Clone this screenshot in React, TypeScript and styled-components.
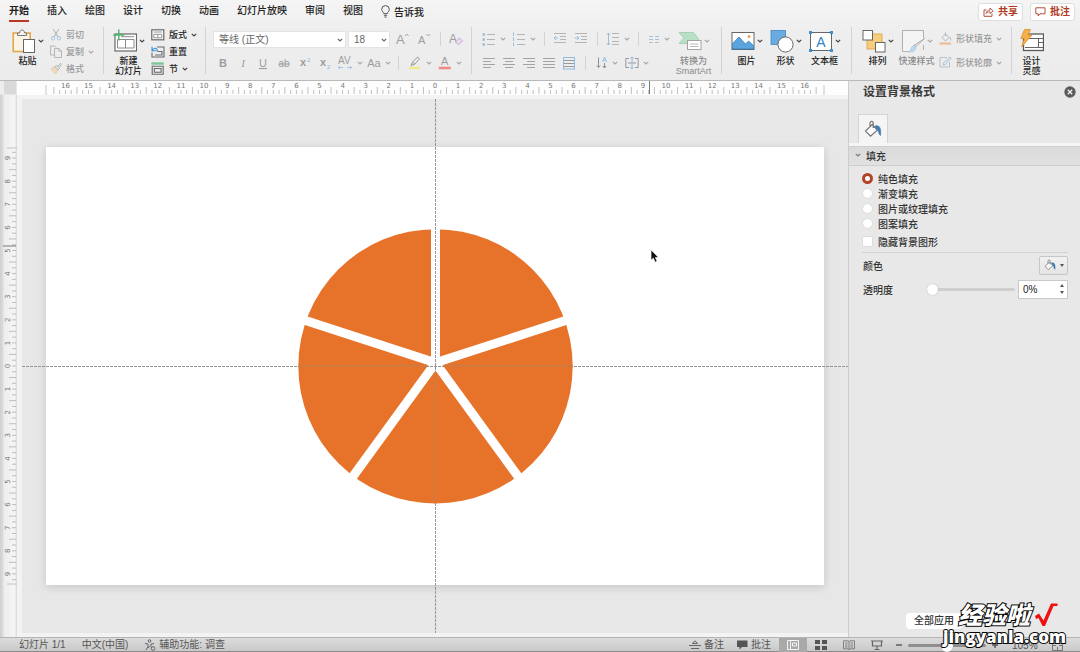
import React from "react";
import styled, { createGlobalStyle } from "styled-components";

const GlobalStyle = createGlobalStyle`
  *, *::before, *::after { box-sizing: border-box; }
  body { margin: 0; background: #e7e7e7; }
  body, button, input, select {
    font-family: "Liberation Sans", "Noto Sans CJK SC", sans-serif;
    font-size: 10px;
    color: #333;
  }
  button { border: 0; padding: 0; background: none; }
  svg { display: block; flex: none; }
  p, h2, h3 { margin: 0; }
`;

const Page = styled.div`
  min-height: 100vh;
  display: flex;
  flex-direction: column;
  overflow: hidden;
`;

/* ---------- header ---------- */

const Header = styled.header`
  background: linear-gradient(#f5f5f5, #eeeeee 40%, #ececec);
  border-bottom: 1px solid #b9b9b9;
`;

const TabBar = styled.nav`
  display: flex;
  align-items: center;
  height: 22px;
  padding: 0 5px 0 9px;
`;

const TabButton = styled.button<{ $active?: boolean }>`
  height: 21px;
  margin-right: 18px;
  padding-top: 1px;
  line-height: 18px;
  font-weight: ${(p) => (p.$active ? 700 : 500)};
  color: #222;
  white-space: nowrap;
  border-bottom: 2px solid ${(p) => (p.$active ? "#b83a26" : "transparent")};
`;

const TellMe = styled.button`
  display: flex;
  align-items: center;
  gap: 4px;
  height: 19px;
  font-weight: 500;
  color: #222;
`;

const HeaderActions = styled.div`
  display: flex;
  gap: 7px;
  margin-left: auto;
`;

const ActionButton = styled.button`
  display: flex;
  align-items: center;
  justify-content: center;
  gap: 4px;
  width: 45px;
  height: 18px;
  margin-top: 2px;
  border: 1px solid #dedede;
  border-radius: 3px;
  background: #fff;
  color: #b03a22;
  font-weight: 700;
  line-height: 14px;
`;

const Ribbon = styled.div`
  display: flex;
  height: 58px;
`;

const Group = styled.section<{ $left?: number; $right?: number }>`
  display: flex;
  flex: none;
  padding: 0 ${(p) => p.$right ?? 0}px 0 ${(p) => p.$left ?? 0}px;
`;

const GroupRule = styled.div`
  flex: none;
  width: 1px;
  height: 47px;
  margin-top: 5px;
  background: #d2d2d2;
`;

const BigTool = styled.button<{ $dim?: boolean }>`
  display: flex;
  flex-direction: column;
  align-items: center;
  flex: none;
  width: 39px;
  padding-top: 6px;
  font-size: 9px;
  line-height: 10px;
  font-weight: 500;
  white-space: nowrap;
  color: ${(p) => (p.$dim ? "#8a8a8a" : "#222")};
`;

const BigIconRow = styled.span`
  display: flex;
  align-items: center;
  gap: 2px;
  height: 28px;
  padding-bottom: 2px;
`;

const SmallList = styled.div<{ $loose?: boolean }>`
  display: flex;
  flex-direction: column;
  gap: ${(p) => (p.$loose ? 7 : 0)}px;
  padding: ${(p) => (p.$loose ? 8 : 4)}px 0 0 3px;
`;

const SmallTool = styled.button<{ $dim?: boolean }>`
  display: flex;
  align-items: center;
  gap: 4px;
  height: 17px;
  font-size: 9px;
  font-weight: 500;
  white-space: nowrap;
  color: ${(p) => (p.$dim ? "#9a9a9a" : "#222")};
`;

const ToolRows = styled.div`
  display: flex;
  flex-direction: column;
  gap: 8px;
  padding-top: 9px;
`;

const ToolRow = styled.div`
  display: flex;
  align-items: center;
  height: 16px;
`;

const Tool = styled.button<{ $width?: number }>`
  display: flex;
  align-items: center;
  justify-content: center;
  gap: 4px;
  flex: none;
  width: ${(p) => p.$width ?? 20}px;
  height: 16px;
  color: #a3a3a3;
`;

const RowRule = styled.div<{ $gap?: number }>`
  width: 1px;
  height: 14px;
  margin: 0 ${(p) => p.$gap ?? 5}px;
  background: #d2d2d2;
`;

const SelectBox = styled.div<{ $width: number }>`
  position: relative;
  width: ${(p) => p.$width}px;
  height: 17px;
  margin-right: 2px;

  select {
    appearance: none;
    width: 100%;
    height: 100%;
    padding: 0 5px;
    border: 1px solid #e4e4e4;
    border-radius: 0;
    background: #fff;
    color: #666;
  }
  svg {
    position: absolute;
    right: 3px;
    top: 7px;
    pointer-events: none;
  }
`;

/* ---------- workspace ---------- */

const Main = styled.main`
  flex: 1;
  display: grid;
  grid-template-columns: minmax(0, 1fr) 232px;
`;

const Workspace = styled.section`
  display: grid;
  grid-template-columns: 17px minmax(0, 1fr);
  grid-template-rows: 14px minmax(0, 1fr);
`;

const RulerCorner = styled.div`
  margin: 0 1px 1px 4px;
  background: #d9d9d9;
  box-shadow: -4px 0 #ededed;
`;

const TopRuler = styled.div`
  display: flex;
  justify-content: center;
  padding-left: 5px;
  background: #fdfdfd;
  overflow: hidden;
`;

const SideRuler = styled.div`
  display: flex;
  flex-direction: column;
  justify-content: center;
  background: linear-gradient(90deg, #cfcfcf, #dcdcdc 3px, #ededed 4px, #f6f6f6 15px, #dedede 16px);
`;

const Stage = styled.div`
  position: relative;
  display: grid;
  place-items: center;
  padding: 0 24px;
  border: solid #f3f3f3;
  border-width: 4px 0 4px 5px;
  background: #e7e7e7;
`;

const Slide = styled.div`
  grid-area: 1 / 1;
  width: 100%;
  aspect-ratio: 16 / 9;
  background: #fff;
  box-shadow: 0 2px 9px rgba(0, 0, 0, 0.14);
`;

const PieArt = styled.svg`
  grid-area: 1 / 1;
  position: relative;
  width: 100%;
  aspect-ratio: 16 / 9;
`;

const GuideH = styled.div`
  position: absolute;
  left: 0;
  right: 0;
  top: 50%;
  height: 1px;
  background: repeating-linear-gradient(90deg, #949494 0 3px, transparent 3px 4px);
`;

const GuideV = styled.div`
  position: absolute;
  top: 0;
  bottom: 0;
  left: 50%;
  width: 1px;
  background: repeating-linear-gradient(#949494 0 3px, transparent 3px 4px);
`;

const Pointer = styled.svg`
  position: absolute;
  left: 76%;
  top: 28%;
`;

/* ---------- format panel ---------- */

const Panel = styled.aside`
  display: flex;
  flex-direction: column;
  border-left: 1px solid #cdcdcd;
  background: #e8e8e8;
`;

const PanelHead = styled.div`
  display: flex;
  align-items: center;
  justify-content: space-between;
  height: 21px;
  padding: 0 4px 0 14px;

  h2 {
    font-size: 12px;
    line-height: 18px;
    font-weight: 700;
    color: #3a3a3a;
  }
`;

const PanelTabs = styled.div`
  padding: 12px 0 0 9px;
  border-bottom: 3px solid #f6f6f6;
`;

const PanelTab = styled.button`
  display: grid;
  place-items: center;
  width: 30px;
  height: 29px;
  border: 1px solid #d4d4d4;
  border-bottom: 0;
  background: #f5f5f5;
`;

const SectionHead = styled.h3`
  display: flex;
  align-items: center;
  gap: 5px;
  height: 20px;
  padding: 0 0 2px 6px;
  border: solid #cfcfcf;
  border-width: 1px 0;
  background: linear-gradient(#dadada, #e1e1e1);
  font-size: 10px;
  font-weight: 500;
`;

const Options = styled.div`
  display: flex;
  flex-direction: column;
  margin: 0 12px 0 13px;
  padding: 5px 0 3px;
  border-bottom: 1px solid #d3d3d3;
`;

const Option = styled.label<{ $spaced?: boolean }>`
  display: flex;
  align-items: center;
  gap: 5px;
  height: 15px;
  margin-top: ${(p) => (p.$spaced ? 3 : 0)}px;
  font-weight: 500;
  white-space: nowrap;

  input {
    appearance: none;
    width: 11px;
    height: 11px;
    margin: 0;
    border: 1px solid #dcdcdc;
    background: #fff;
  }
  input[type="radio"] { border-radius: 50%; }
  input[type="checkbox"] { border-radius: 2px; }
  input[type="radio"]:checked { border: 3px solid #b0432a; }
`;

const FieldRow = styled.div`
  display: flex;
  align-items: center;
  height: 24px;
  margin: 0 12px 0 14px;
  font-weight: 500;
`;

const ColorButton = styled.button`
  display: flex;
  align-items: center;
  justify-content: center;
  gap: 4px;
  width: 29px;
  height: 19px;
  margin-left: auto;
  border: 1px solid #c6c6c6;
  border-radius: 2px;
  background: linear-gradient(#f2f2f2, #e4e4e4);
`;

const Range = styled.input<{ $track: string; $knob: number }>`
  appearance: none;
  height: 14px;
  margin: 0;
  background: transparent;

  &::-webkit-slider-runnable-track {
    height: 3px;
    border-radius: 2px;
    background: ${(p) => p.$track};
  }
  &::-webkit-slider-thumb {
    appearance: none;
    width: ${(p) => p.$knob}px;
    height: ${(p) => p.$knob}px;
    margin-top: ${(p) => Math.round((3 - p.$knob) / 2)}px;
    border-radius: 50%;
    background: #fff;
    box-shadow: 0 0 1px rgba(0, 0, 0, 0.35);
  }
`;

const OpacityRange = styled(Range)`
  width: 88px;
  margin-left: auto;
`;

const NumberBox = styled.div`
  display: flex;
  width: 50px;
  height: 19px;
  margin-left: 3px;
  border: 1px solid #c9c9c9;
  background: #fff;

  input {
    flex: 1;
    min-width: 0;
    padding: 0 0 0 4px;
    border: 0;
    background: transparent;
    color: #222;
  }
`;

const Stepper = styled.div`
  display: flex;
  flex-direction: column;
  justify-content: space-evenly;
  align-items: center;
  width: 10px;
`;

const PanelFoot = styled.div`
  position: relative;
  display: flex;
  margin: auto 0 8px 57px;
`;

const ApplyButton = styled.button`
  width: 56px;
  height: 16px;
  border-radius: 4px;
  background: #fff;
  font-weight: 500;
  line-height: 14px;
`;

const Watermark = styled.div`
  position: absolute;
  left: 37px;
  bottom: -17px;
  z-index: 2;
  white-space: nowrap;
  color: #fff;
  font-family: "Open Sans", "Noto Sans CJK SC", sans-serif;
  font-weight: 800;
  -webkit-text-stroke: 2px #000;
  paint-order: stroke fill;
`;

const WatermarkTitle = styled.div`
  display: flex;
  gap: 4px;
  padding-left: 15px;
  font-size: 24px;
  line-height: 24px;
  font-style: italic;
`;

const WatermarkSite = styled.div`
  font-size: 17px;
  line-height: 19px;
`;

/* ---------- status bar ---------- */

const StatusBar = styled.footer`
  display: flex;
  align-items: center;
  height: 15px;
  padding: 1px 17px 0 19px;
  border-top: 1px solid #b4b4b4;
  border-bottom: 1px solid #8c8c8c;
  background: linear-gradient(#dcdcdc, #c9c9c9);
  color: #555;
  white-space: nowrap;
`;

const StatusItem = styled.button<{ $after?: number }>`
  display: flex;
  align-items: center;
  gap: 3px;
  margin-right: ${(p) => p.$after ?? 16}px;
  line-height: 14px;
  color: #555;
`;

const ViewButton = styled.button<{ $active?: boolean }>`
  display: grid;
  place-items: center;
  width: 28px;
  height: 14px;
  background: ${(p) => (p.$active ? "#a9a9a9" : "transparent")};
`;

const StatusRight = styled.div`
  display: flex;
  align-items: center;
  margin-left: auto;
`;

const ZoomRange = styled(Range)`
  width: 78px;
  margin: 0 5px;
`;

const ZoomValue = styled.span`
  width: 25px;
  margin: 0 15px 0 13px;
`;

/* ---------- drawings ---------- */

const Svg = ({ w, h, children }: { w: number; h: number; children: React.ReactNode }) => (
  <svg width={w} height={h} viewBox={`0 0 ${w} ${h}`} fill="none" aria-hidden="true">
    {children}
  </svg>
);

const Chevron = ({ color = "#444" }: { color?: string }) => (
  <Svg w={6} h={4}>
    <path d="M.8 .8 3 3 5.2 .8" stroke={color} strokeWidth="1.2" />
  </Svg>
);
const dim = "#a8a8a8";

const BulbIcon = () => (
  <Svg w={9} h={13}>
    <path d="M2.700 8.600C2.700 7.200.7 6.400.7 4.400a3.800 3.800 0 0 1 7.600 0c0 2-2 2.800-2 4.200zM2.900 10.300h3.200M3.400 12h2.200" stroke="#555" />
  </Svg>
);
const ShareIcon = () => (
  <Svg w={11} h={10}>
    <path d="M3.500 3H1v6.300h8V6.500" stroke="#b03a22" strokeWidth=".9" />
    <path d="M3.200 6.500C3.400 4 5 3 7 3V1l3.200 3L7 6.500V4.800C5.200 4.800 4 5.200 3.200 6.500z" stroke="#b03a22" strokeWidth=".8" />
  </Svg>
);
const CommentIcon = () => (
  <Svg w={11} h={10}>
    <path d="M.8 .8h9.200v6H5L3.200 8.900V6.800H.8z" stroke="#b03a22" strokeWidth=".9" />
  </Svg>
);

const PasteIcon = () => (
  <Svg w={24} h={24}>
    <rect x="1.200" y="4" width="17" height="18.500" fill="#fbf3e4" stroke="#e3a84e" strokeWidth="1.600" />
    <path d="M5.500 6.500V4h2.200c0-4 4.800-4 4.800 0h2.200v2.500z" fill="#f6f6f6" stroke="#777" />
    <rect x="11.500" y="10.500" width="11" height="13" fill="#fff" stroke="#666" />
  </Svg>
);
const CutIcon = () => (
  <Svg w={12} h={13}>
    <path d="M3.200 1 8 9M8.800 1 4 9" stroke="#b0b0b0" />
    <circle cx="3" cy="10.300" r="1.700" stroke="#a9c6de" />
    <circle cx="9" cy="10.300" r="1.700" stroke="#a9c6de" />
  </Svg>
);
const CopyIcon = () => (
  <Svg w={12} h={13}>
    <path d="M4 10H.6V1h4L6 2.500M4.500 3.500H9l2.500 2.500v6.500h-7zM8.800 3.500V6.200h2.700" stroke="#b5b5b5" />
  </Svg>
);
const BrushIcon = () => (
  <Svg w={12} h={13}>
    <path d="m1 7 4-2.500 3 3.500L5.500 12z" fill="#f1d9bd" stroke="#dcc0a0" strokeWidth=".7" />
    <path d="m5 4.500 2-1 2.500 3L8 8zM8 4.500 10.500 1.200l1 1L9 5.600" fill="#eee" stroke="#b0b0b0" strokeWidth=".9" />
  </Svg>
);
const NewSlideIcon = () => (
  <Svg w={24} h={24}>
    <rect x="2" y="5" width="21.500" height="17" fill="#fff" stroke="#686868" strokeWidth="1.200" />
    <path d="M4.500 10.500H21V19H4.500zM12.500 10.500V19M8 7.700h13" stroke="#8b8b8b" />
    <path d="M5.800 .5v11M.3 6h11" stroke="#46b56c" strokeWidth="1.400" />
  </Svg>
);
const LayoutIcon = () => (
  <Svg w={14} h={12}>
    <rect x=".8" y=".8" width="12" height="10" fill="#fff" stroke="#686868" strokeWidth="1.200" />
    <path d="M2.800 5.300h8v3.500h-8zM6.800 5.300v3.500M2.800 3h8" stroke="#888" strokeWidth=".9" />
  </Svg>
);
const ResetIcon = () => (
  <Svg w={14} h={12}>
    <path d="M6 1h7v10H1V6.500M6.500 5.500h4.500V9H4" stroke="#686868" strokeWidth="1.100" />
    <path d="M1 .8v4h4M1.300 4.500C3 .8 6.500 2 6.300 5.800" stroke="#3d8fd1" strokeWidth="1.100" />
  </Svg>
);
const SectionIcon = () => (
  <Svg w={14} h={13}>
    <path d="M.3 1.500h12.500" stroke="#7cc594" strokeWidth="2.400" />
    <path d="M1.200 4.300h11v8h-11zM3.300 6.500h6.800v3.700H3.300z" stroke="#686868" strokeWidth="1.100" />
  </Svg>
);

const letter = { fontFamily: "Liberation Sans", fill: "#9d9d9d" };
const GrowIcon = ({ up }: { up?: boolean }) => (
  <Svg w={14} h={14}>
    <text x="0" y="12" fontSize={up ? 13 : 11} {...letter}>A</text>
    <path d={up ? "m9 4 1.800-2 1.800 2" : "m8.500 2 1.800 2L12 2"} stroke="#a0a0a0" strokeWidth=".9" />
  </Svg>
);
const ClearIcon = () => (
  <Svg w={15} h={14}>
    <text x="0" y="11" fontSize="12" {...letter}>A</text>
    <path d="m6.500 10 3.800-4 3.200 2.800-3.800 4z" fill="#ecdff0" stroke="#c9a5d3" />
  </Svg>
);
const LetterIcon = ({ children, ...rest }: React.SVGProps<SVGTextElement>) => (
  <Svg w={14} h={14}>
    <text x="7" y="11" textAnchor="middle" fontSize="11" {...letter} {...rest}>{children}</text>
  </Svg>
);
const ScriptIcon = ({ sub }: { sub?: boolean }) => (
  <Svg w={12} h={14}>
    <text x="1" y="10" fontSize="11" fontWeight="700" {...letter}>x</text>
    <text x="8" y={sub ? 13 : 6} fontSize="6" {...letter} fill="#8fb5d4">2</text>
  </Svg>
);
const SpacingIcon = () => (
  <Svg w={16} h={14}>
    <text x="1" y="8" fontSize="10" {...letter}>AV</text>
    <path d="M1.500 11.500H6M10 11.500h4.500M3 10l-1.700 1.500L3 13M13 10l1.700 1.500L13 13" stroke="#a4c8e4" />
  </Svg>
);
const MarkerIcon = () => (
  <Svg w={14} h={14}>
    <path d="m3 9.500 1.500-3.300L9.500 1l2 1.800-4.700 5.400zM4.500 6.200l2.300 2" stroke="#999" />
    <path d="M1 12h11" stroke="#eeea8e" strokeWidth="2.600" />
  </Svg>
);
const FontColorIcon = () => (
  <Svg w={14} h={14}>
    <text x="3" y="9" fontSize="11" {...letter}>A</text>
    <path d="M.8 12h12" stroke="#ee8b88" strokeWidth="2.600" />
  </Svg>
);

const Lines = ({ rows, w = 14, color = "#b4b4b4", children }: { rows: number[][]; w?: number; color?: string; children?: React.ReactNode }) => (
  <Svg w={w} h={14}>
    {rows.map(([x1, x2, y]) => (
      <path key={y} d={`M${x1} ${y}H${x2}`} stroke={color} />
    ))}
    {children}
  </Svg>
);
const BulletIcon = ({ numbered }: { numbered?: boolean }) => (
  <Lines rows={[[5, 13, 2.5], [5, 13, 7.5], [5, 13, 12.5]]}>
    <path
      d={numbered ? "M1.500 .5v3.500M1.500 5.500v3.500M1.500 10.500V14" : "M.5 2.500h2.500M.5 7.500h2.500M.5 12.500h2.500"}
      stroke="#9fbfd9"
      strokeWidth={numbered ? 1 : 2.5}
    />
  </Lines>
);
const IndentIcon = ({ more }: { more?: boolean }) => (
  <Lines rows={[[1, 13, 1.5], [7, 13, 4.5], [7, 13, 7.5], [1, 13, 10.5]]}>
    <path d={more ? "M.5 6h4M3 4l2 2-2 2" : "M5 6H1M3 4 1 6l2 2"} stroke="#9fbfd9" />
  </Lines>
);
const LineSpacingIcon = () => (
  <Lines rows={[[6, 13, 1.5], [6, 13, 5.5], [6, 13, 9.5], [6, 13, 12.5]]}>
    <path d="M2.500 1v12M.7 3l1.800-2 1.800 2M.7 11l1.800 2 1.800-2" stroke="#9fbfd9" />
  </Lines>
);
const ColumnsIcon = () => (
  <Svg w={12} h={14}>
    <path d="M1 4.500h4M7 4.500h4M1 7.500h4M7 7.500h4M1 10.500h4M7 10.500h4" stroke="#a7c0d6" />
  </Svg>
);
const AlignIcon = ({ kind }: { kind: "left" | "center" | "right" | "full" }) => {
  const short = { left: [1, 9], center: [3, 11], right: [5, 13], full: [1, 13] }[kind];
  return <Lines color="#a3a3a3" rows={[[1, 13, 2.5], [...short, 5.5], [1, 13, 8.5], [...short, 11.5]]} />;
};
const DistributeIcon = () => (
  <Lines color="#999" rows={[[1, 13, 4.5], [1, 13, 7.5], [1, 13, 10.5]]}>
    <path d="M1.500 1v12.500M12.500 1v12.500M1 1.500h12M1 13h12" stroke="#90bce0" />
  </Lines>
);
const TextDirIcon = () => (
  <Svg w={12} h={14}>
    <path d="M2.500 1.500v10M.8 9.500l1.700 2 1.700-2M8.500 7v5M6.800 10l1.700 2 1.700-2" stroke="#8f8f8f" />
    <path d="m6.500 6 2-5 2 5M7.200 4.300h2.600" stroke="#90bce0" strokeWidth=".9" />
  </Svg>
);
const VAlignIcon = () => (
  <Svg w={14} h={14}>
    <path d="M4 2.500H.8v9H4M10 2.500h3.200v9H10M2.800 7h8.400" stroke="#999" />
    <path d="M7 .8v12.400M5.300 2.800 7 1l1.700 1.800M5.300 11.200 7 13l1.700-1.800" stroke="#90bce0" />
  </Svg>
);
const SmartArtIcon = () => (
  <Svg w={24} h={24}>
    <path d="M1 3.500h14.500l5.500 7-3 4H1l5-5.500z" fill="#b9dfc5" stroke="#9bcdaa" strokeWidth=".8" />
    <rect x="9.500" y="11.500" width="13.500" height="9" fill="#fff" stroke="#a2a2a2" />
    <path d="M12 15h8.500M12 17.500h8.500" stroke="#b9b9b9" />
  </Svg>
);
const PictureIcon = () => (
  <Svg w={24} h={24}>
    <rect x="1" y="3.500" width="22" height="17" fill="#fff" stroke="#666" />
    <path d="M1.500 14.500 8 8l6.500 7 3-3 5 4.500V20h-21z" fill="#5aa5dd" stroke="#2f79b5" strokeWidth=".7" />
    <circle cx="18" cy="7.500" r="1.500" fill="#eda25a" />
  </Svg>
);
const ShapesIcon = () => (
  <Svg w={24} h={24}>
    <rect x="1" y="1.500" width="14.500" height="14" fill="#69abe0" stroke="#3f86c4" strokeWidth=".8" />
    <circle cx="15.500" cy="15.500" r="7.600" fill="#fff" stroke="#666" />
  </Svg>
);
const TextBoxIcon = () => (
  <Svg w={24} h={24}>
    <rect x="1.500" y="3.500" width="21" height="18" fill="#fff" stroke="#666" />
    <path d="M0 2h3v3H0zM21 2h3v3h-3zM0 20h3v3H0zM21 20h3v3h-3z" fill="#3f8fd0" />
    <text x="12" y="17.500" textAnchor="middle" fontSize="14" fontFamily="Liberation Sans" fill="#3182c8">A</text>
  </Svg>
);
const ArrangeIcon = () => (
  <Svg w={24} h={24}>
    <rect x="5" y="5" width="15" height="15" fill="#f6ce7c" stroke="#e0ab50" />
    <rect x="1" y="1.500" width="9.500" height="9.500" fill="#fff" stroke="#666" />
    <rect x="13.500" y="13.500" width="9.500" height="9.500" fill="#fff" stroke="#666" />
  </Svg>
);
const StylesIcon = () => (
  <Svg w={24} h={24}>
    <path d="M2 2h20v10L12 22H2z" fill="#f4f4f4" />
    <path d="M22.500 9V1.500h-21v21H8M22.500 16v5" stroke="#b0b0b0" />
    <path d="m23.500 9.500-8.500 8-2-1.200z" fill="#eee" stroke="#a8a8a8" strokeWidth=".9" />
    <path d="M7.500 23c3 0 7-.5 7.500-5l-2.500-1.500C9.500 17.500 11 21.500 7.500 23z" fill="#bdd9ee" stroke="#9fc3df" strokeWidth=".8" />
  </Svg>
);
const FillIcon = () => (
  <Svg w={13} h={13}>
    <path d="M3 5.500 6.500 2 10 5.500 6.500 9zM6.500 4V.5M10.500 5c1.500 1 1.300 2.500 1 3.500" stroke="#a9b7c4" />
    <path d="M.5 11.500h11.500" stroke="#eebd95" strokeWidth="2.200" />
  </Svg>
);
const OutlineIcon = () => (
  <Svg w={13} h={13}>
    <path d="M8 1.500H1V11h9.500V6" stroke="#b3c3cf" />
    <path d="M4 9c.5-2 1-3 2-3.500L11 1l1.200 1L7.500 7.500C7 8.500 5.500 9 4 9z" fill="#dbe8f1" stroke="#a5b8c7" strokeWidth=".8" />
  </Svg>
);
const DesignIcon = () => (
  <Svg w={24} h={24}>
    <rect x="3.500" y="5" width="20" height="16.500" fill="#fff" stroke="#595959" strokeWidth="1.300" />
    <path d="M5 9.500h18M18.500 9.500v9M5 18.500h18M18.500 13.500H23" stroke="#666" />
    <path d="M4.500 .5h6L8 6h4L1.500 18l3-8.500H.8z" fill="#f6b04a" stroke="#dc8f2c" strokeWidth=".8" />
  </Svg>
);

const BucketIcon = ({ size = 18 }: { size?: number }) => (
  <svg width={size} height={size} viewBox="0 0 18 18" fill="none" aria-hidden="true">
    <path d="M8.200 4.500 1.500 11l5 5.200 7-6.200zM6 7V3.200c0-2.500 3.200-2.500 3.200 0V8" fill="#fafafa" stroke="#777" strokeWidth="1.200" />
    <path d="M11 6c4-1.500 6.500 1.500 5.500 9.500-2-1-1.500-5-3.500-6z" fill="#3f7fbb" stroke="#3a6d9f" strokeWidth=".6" />
  </svg>
);
const CloseIcon = () => (
  <Svg w={12} h={12}>
    <circle cx="6" cy="6" r="5.700" fill="#5b5b5b" />
    <path d="m3.800 3.800 4.400 4.400M8.200 3.800 3.800 8.200" stroke="#f2f2f2" strokeWidth="1.300" />
  </Svg>
);

const PITCH = 23.1;
function Ruler({ max, end, marker, vertical }: { max: number; end: number; marker: number; vertical?: boolean }) {
  const quarters = Array.from({ length: (max * 4 + 2) * 2 + 1 }, (_, i) => i - (max * 4 + 2));
  const numbers = Array.from({ length: max * 2 + 1 }, (_, i) => i - max);
  const size = end * 2 + 2;
  const art = (
    <>
      {quarters.map((q) => {
        const long = Math.abs(q) % 4 === 2;
        return <path key={q} d={`M${(q * PITCH) / 4} ${long ? 6 : 9}V13`} stroke="#b0b0b0" strokeWidth=".8" />;
      })}
      <path d={`M${-end} 4V14M${end} 4V14`} stroke="#b8b8b8" strokeWidth=".8" />
      <path d={`M${marker} 0V13`} stroke="#777" />
      {numbers.map((n) => (
        <text key={n} x={n * PITCH} y="7" textAnchor="middle" fontSize="7" fontFamily="DejaVu Sans" fill="#777">
          {Math.abs(n)}
        </text>
      ))}
    </>
  );
  return vertical ? (
    <svg width="17" height={size} viewBox={`0 ${-size / 2} 17 ${size}`} fill="none">
      <g transform="translate(3 0) rotate(-90)">{art}</g>
    </svg>
  ) : (
    <svg width={size} height="14" viewBox={`${-size / 2} 0 ${size} 14`} fill="none">
      {art}
    </svg>
  );
}

function Pie() {
  return (
    <PieArt viewBox="0 0 778 438" role="img" aria-label="五等分饼图">
      <mask id="spokes" maskUnits="userSpaceOnUse" x="0" y="0" width="778" height="438">
        <rect width="778" height="438" fill="#fff" />
        {[0, 72, 144, 216, 288].map((a) => (
          <path key={a} d="M389.500 216V50" stroke="#000" strokeWidth="9" transform={`rotate(${a} 389.500 216)`} />
        ))}
      </mask>
      <g mask="url(#spokes)">
        <circle cx="389.500" cy="219.500" r="137.300" fill="#e7732b" />
        <path d="M252 219h275M389.500 219v138" stroke="#bd8254" />
      </g>
    </PieArt>
  );
}

/* ---------- screen ---------- */

const TABS = ["开始", "插入", "绘图", "设计", "切换", "动画", "幻灯片放映", "审阅", "视图"];

function Big({ icon, lines, isDim, plain }: { icon: React.ReactNode; lines: string[]; isDim?: boolean; plain?: boolean }) {
  return (
    <BigTool $dim={isDim}>
      <BigIconRow>
        {icon}
        {!plain && <Chevron color={isDim ? dim : "#444"} />}
      </BigIconRow>
      {lines.map((l) => (
        <span key={l}>{l}</span>
      ))}
    </BigTool>
  );
}

export default function App() {
  return (
    <Page>
      <GlobalStyle />
      <Header>
        <TabBar>
          {TABS.map((t, i) => (
            <TabButton key={t} $active={i === 0}>{t}</TabButton>
          ))}
          <TellMe><BulbIcon />告诉我</TellMe>
          <HeaderActions>
            <ActionButton><ShareIcon />共享</ActionButton>
            <ActionButton><CommentIcon />批注</ActionButton>
          </HeaderActions>
        </TabBar>
        <Ribbon>
          <Group $left={8} $right={9}>
            <Big icon={<PasteIcon />} lines={["粘贴"]} />
            <SmallList>
              <SmallTool $dim><CutIcon />剪切</SmallTool>
              <SmallTool $dim><CopyIcon />复制<Chevron color={dim} /></SmallTool>
              <SmallTool $dim><BrushIcon />格式</SmallTool>
            </SmallList>
          </Group>
          <GroupRule />
          <Group $left={5} $right={8}>
            <Big icon={<NewSlideIcon />} lines={["新建", "幻灯片"]} />
            <SmallList>
              <SmallTool><LayoutIcon />版式<Chevron /></SmallTool>
              <SmallTool><ResetIcon />重置</SmallTool>
              <SmallTool><SectionIcon />节<Chevron /></SmallTool>
            </SmallList>
          </Group>
          <GroupRule />
          <Group $left={7} $right={5}>
            <ToolRows>
              <ToolRow>
                <SelectBox $width={133}>
                  <select aria-label="字体"><option>等线 (正文)</option></select>
                  <Chevron color="#666" />
                </SelectBox>
                <SelectBox $width={42}>
                  <select aria-label="字号"><option>18</option></select>
                  <Chevron color="#666" />
                </SelectBox>
                <Tool $width={22} aria-label="增大字号"><GrowIcon up /></Tool>
                <Tool $width={21} aria-label="减小字号"><GrowIcon /></Tool>
                <RowRule />
                <Tool $width={20} aria-label="清除格式"><ClearIcon /></Tool>
              </ToolRow>
              <ToolRow>
                <Tool aria-label="加粗"><LetterIcon fontWeight="700">B</LetterIcon></Tool>
                <Tool aria-label="倾斜"><LetterIcon fontStyle="italic" fontFamily="Liberation Serif">I</LetterIcon></Tool>
                <Tool aria-label="下划线"><LetterIcon textDecoration="underline">U</LetterIcon></Tool>
                <Tool $width={22} aria-label="删除线"><LetterIcon fontSize="10" textDecoration="line-through">ab</LetterIcon></Tool>
                <Tool aria-label="上标"><ScriptIcon /></Tool>
                <Tool aria-label="下标"><ScriptIcon sub /></Tool>
                <Tool $width={29} aria-label="字符间距"><SpacingIcon /><Chevron color={dim} /></Tool>
                <Tool $width={29} aria-label="更改大小写"><LetterIcon>Aa</LetterIcon><Chevron color={dim} /></Tool>
                <RowRule />
                <Tool $width={32} aria-label="突出显示"><MarkerIcon /><Chevron color={dim} /></Tool>
                <Tool $width={28} aria-label="字体颜色"><FontColorIcon /><Chevron color={dim} /></Tool>
              </ToolRow>
            </ToolRows>
          </Group>
          <GroupRule />
          <Group $left={7} $right={8}>
            <ToolRows>
              <ToolRow>
                <Tool $width={30} aria-label="项目符号"><BulletIcon /><Chevron color={dim} /></Tool>
                <Tool $width={30} aria-label="编号"><BulletIcon numbered /><Chevron color={dim} /></Tool>
                <RowRule />
                <Tool aria-label="减少缩进"><IndentIcon /></Tool>
                <Tool $width={22} aria-label="增加缩进"><IndentIcon more /></Tool>
                <RowRule />
                <Tool $width={30} aria-label="行距"><LineSpacingIcon /><Chevron color={dim} /></Tool>
                <RowRule />
                <Tool $width={30} aria-label="分栏"><ColumnsIcon /><Chevron color={dim} /></Tool>
              </ToolRow>
              <ToolRow>
                <Tool aria-label="左对齐"><AlignIcon kind="left" /></Tool>
                <Tool aria-label="居中"><AlignIcon kind="center" /></Tool>
                <Tool aria-label="右对齐"><AlignIcon kind="right" /></Tool>
                <Tool aria-label="两端对齐"><AlignIcon kind="full" /></Tool>
                <Tool aria-label="分散对齐"><DistributeIcon /></Tool>
                <RowRule $gap={6} />
                <Tool $width={30} aria-label="文字方向"><TextDirIcon /><Chevron color={dim} /></Tool>
                <Tool $width={30} aria-label="对齐文本"><VAlignIcon /><Chevron color={dim} /></Tool>
              </ToolRow>
            </ToolRows>
            <Big isDim icon={<SmartArtIcon />} lines={["转换为", "SmartArt"]} />
          </Group>
          <GroupRule />
          <Group $left={5} $right={7}>
            <Big icon={<PictureIcon />} lines={["图片"]} />
            <Big icon={<ShapesIcon />} lines={["形状"]} />
            <Big icon={<TextBoxIcon />} lines={["文本框"]} />
          </Group>
          <GroupRule />
          <Group $left={6} $right={9}>
            <Big icon={<ArrangeIcon />} lines={["排列"]} />
            <Big isDim icon={<StylesIcon />} lines={["快速样式"]} />
            <SmallList $loose>
              <SmallTool $dim><FillIcon />形状填充<Chevron color={dim} /></SmallTool>
              <SmallTool $dim><OutlineIcon />形状轮廓<Chevron color={dim} /></SmallTool>
            </SmallList>
          </Group>
          <GroupRule />
          <Group>
            <Big plain icon={<DesignIcon />} lines={["设计", "灵感"]} />
          </Group>
        </Ribbon>
      </Header>

      <Main>
        <Workspace>
          <RulerCorner />
          <TopRuler><Ruler max={16} end={389} marker={214.5} /></TopRuler>
          <SideRuler><Ruler max={9} end={218} marker={120} vertical /></SideRuler>
          <Stage>
            <Slide />
            <GuideH />
            <GuideV />
            <Pie />
            <Pointer width="10" height="14" viewBox="0 0 10 14" aria-hidden="true">
              <path d="M1 .8v10.400l2.400-2 1.700 4 2-.9-1.700-3.800h3.200z" fill="#111" stroke="#fff" strokeWidth=".7" />
            </Pointer>
          </Stage>
        </Workspace>

        <Panel>
          <PanelHead>
            <h2>设置背景格式</h2>
            <button aria-label="关闭"><CloseIcon /></button>
          </PanelHead>
          <PanelTabs>
            <PanelTab aria-label="填充"><BucketIcon /></PanelTab>
          </PanelTabs>
          <SectionHead><Chevron color="#777" />填充</SectionHead>
          <Options>
            <Option><input type="radio" name="fill" defaultChecked />纯色填充</Option>
            <Option><input type="radio" name="fill" />渐变填充</Option>
            <Option><input type="radio" name="fill" />图片或纹理填充</Option>
            <Option><input type="radio" name="fill" />图案填充</Option>
            <Option $spaced><input type="checkbox" />隐藏背景图形</Option>
          </Options>
          <FieldRow>
            颜色
            <ColorButton aria-label="颜色">
              <BucketIcon size={12} />
              <Svg w={4} h={3}><path d="M0 0h4L2 3z" fill="#555" /></Svg>
            </ColorButton>
          </FieldRow>
          <FieldRow>
            <label htmlFor="opacity">透明度</label>
            <OpacityRange id="opacity" type="range" defaultValue={0} $track="#cfcfcf" $knob={11} />
            <NumberBox>
              <input aria-label="透明度百分比" defaultValue="0%" />
              <Stepper>
                <button aria-label="增加"><Svg w={4} h={3}><path d="M0 3h4L2 0z" fill="#555" /></Svg></button>
                <button aria-label="减少"><Svg w={4} h={3}><path d="M0 0h4L2 3z" fill="#555" /></Svg></button>
              </Stepper>
            </NumberBox>
          </FieldRow>
          <PanelFoot>
            <ApplyButton>全部应用</ApplyButton>
            <Watermark>
              <WatermarkTitle>
                经验啦
                <Svg w={24} h={24}>
                  <path d="M1 13 5 10.500l4.500 7L17 .5h6.500V3h-4L11 23H8.500l-4-8L2 16z" fill="#f01010" />
                </Svg>
              </WatermarkTitle>
              <WatermarkSite>jingyanla.com</WatermarkSite>
            </Watermark>
          </PanelFoot>
        </Panel>
      </Main>

      <StatusBar>
        <StatusItem>幻灯片 1/1</StatusItem>
        <StatusItem>中文(中国)</StatusItem>
        <StatusItem>
          <Svg w={12} h={12}>
            <circle cx="5.500" cy="2" r="1.300" stroke="#666" />
            <path d="M1 4.500 4 5v2.500L2 11.300M10 4.500 7 5v2.500l.8 1.500M4.300 9l1.200-2" stroke="#666" />
            <circle cx="9" cy="9.500" r="1.800" stroke="#666" />
          </Svg>
          辅助功能: 调查
        </StatusItem>
        <StatusRight>
          <StatusItem $after={13}>
            <Svg w={12} h={10}><path d="M0 5.500h12M2 8.500h8M3.500 3.500h5L6 .8z" stroke="#666" /></Svg>
            备注
          </StatusItem>
          <StatusItem $after={8}>
            <Svg w={11} h={10}><path d="M0 .5h10.500V7H5L2.500 9.500V7H0z" fill="#555" /></Svg>
            批注
          </StatusItem>
          <ViewButton $active aria-label="普通视图">
            <Svg w={12} h={10}><path d="M.5 .5h11v9H.5zM3.500 .5v9M5.500 3h4v3h-4z" stroke="#f5f5f5" /></Svg>
          </ViewButton>
          <ViewButton aria-label="幻灯片浏览">
            <Svg w={12} h={10}><path d="M0 0h5v4H0zM7 0h5v4H7zM0 6h5v4H0zM7 6h5v4H7z" fill="#555" /></Svg>
          </ViewButton>
          <ViewButton aria-label="阅读视图">
            <Svg w={12} h={10}><path d="M6 1.500v8M.5 .8H5l1 .8 1-.8h4.500v8H7l-1 .8-1-.8H.5zM2 3h2.500M2 5h2.500M2 7h2.500M7.500 3H10M7.500 5H10M7.500 7H10" stroke="#777" strokeWidth=".9" /></Svg>
          </ViewButton>
          <ViewButton aria-label="幻灯片放映">
            <Svg w={12} h={10}><path d="M0 1h12M1.500 1v5h9V1M6 6v3M3.500 9.500h5" stroke="#666" strokeWidth="1.200" /></Svg>
          </ViewButton>
          <StatusItem $after={0} aria-label="缩小"><Svg w={12} h={8}><path d="M5 4h6" stroke="#555" strokeWidth="1.400" /></Svg></StatusItem>
          <ZoomRange aria-label="缩放" type="range" defaultValue={50} $track="#8e8e8e" $knob={12} />
          <StatusItem $after={0} aria-label="放大"><Svg w={8} h={8}><path d="M1 4h6M4 1v6" stroke="#555" strokeWidth="1.400" /></Svg></StatusItem>
          <ZoomValue>105%</ZoomValue>
          <Svg w={11} h={11}>
            <path d="M.5 .5h10v10H.5zM5.500 1v3M5.500 7v3M1 5.500h3M7 5.500h3" stroke="#777" />
          </Svg>
        </StatusRight>
      </StatusBar>
    </Page>
  );
}
